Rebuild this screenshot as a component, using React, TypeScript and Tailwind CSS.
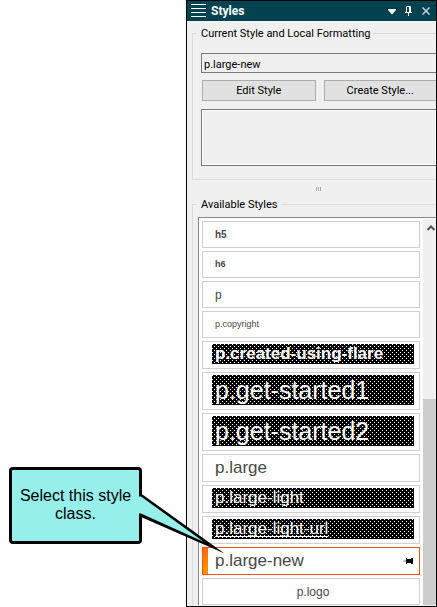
import React from "react";

type StyleItem = { name: string; box: string; text: string; dark?: boolean; selected?: boolean };

const items: StyleItem[] = [
  { name: "h5", box: "h-[27px]", text: "text-[10px] font-bold" },
  { name: "h6", box: "h-[27px]", text: "text-[9px] font-bold" },
  { name: "p", box: "h-[27px]", text: "text-[12px]" },
  { name: "p.copyright", box: "h-[27px]", text: "text-[9px]" },
  { name: "p.created-using-flare", box: "h-7", text: "text-[17px] font-bold h-5 leading-5", dark: true },
  { name: "p.get-started1", box: "h-[38px]", text: "text-[25px] h-[30px] leading-[30px]", dark: true },
  { name: "p.get-started2", box: "h-[38px]", text: "text-[25px] h-[30px] leading-[30px]", dark: true },
  { name: "p.large", box: "h-7", text: "text-[17px]" },
  { name: "p.large-light", box: "h-7", text: "text-[17px] h-5 leading-5", dark: true },
  { name: "p.large-light-url", box: "h-7", text: "text-[17px] h-5 leading-5 underline underline-offset-2 decoration-1 [text-decoration-skip-ink:none]", dark: true },
  { name: "p.large-new", box: "h-7", text: "text-[17px]", selected: true },
  { name: "p.logo", box: "h-[27px]", text: "text-[12px] w-full text-center" },
];

function StyleRow({ item }: { item: StyleItem }) {
  const border = item.selected ? "border-[#f4500f]" : "border-[#d0d0d0]";
  return (
    <li>
      <button type="button" className={`flex w-full border bg-white text-left ${border} ${item.box} ${item.dark ? "items-start pt-0.5 pr-[5px] pl-[9px]" : "items-center"}`}>
        {item.selected && <span className="h-full w-[5px] shrink-0 bg-linear-to-b from-[#ff6a00] to-[#ff9500]" />}
        <span
          className={`${item.text} ${
            item.dark
              ? "w-full bg-black bg-[conic-gradient(from_0deg_at_1px_1px,#0000_270deg,#fff_0),conic-gradient(from_0deg_at_1px_1px,#0000_270deg,#fff_0)] bg-[length:4px_4px] bg-[position:0_0,2px_2px] pl-[3px] text-white"
              : item.selected ? "pl-[7px] text-[#484848]" : item.name === "p.logo" ? "pl-1 text-[#484848]" : "pl-3 text-[#484848]"
          }`}
        >
          {item.name}
        </span>
        {item.selected && (
          <svg className="mr-1.5 ml-auto" width="10" height="8" viewBox="0 0 10 8" aria-hidden="true">
            <path d="M0 3.500h3v1H0z" fill="#888" />
            <path d="M3 1h1v1h4V1h2v6H8V6H4v1H3z" fill="#000" />
          </svg>
        )}
      </button>
    </li>
  );
}

const windowButton = "flex h-4 w-[17px] items-center justify-center";
const pushButton = "h-[21px] flex-1 border border-[#adadad] bg-[#e1e1e1] pt-0.5";

export default function App() {
  return (
    <main className="relative h-screen overflow-hidden bg-white pl-[186px] font-[Roboto,'Noto_Sans',sans-serif] text-[11px] text-black">
      <section className="flex h-full flex-col overflow-hidden border border-black bg-[#f0f0f0]">
        <header className="flex h-5 shrink-0 items-center bg-[#004250] pl-1 text-white">
          <svg width="15" height="14" viewBox="0 0 15 14" aria-hidden="true">
            <path d="M0 .5h15M0 4.500h15M0 8.500h15M0 12.500h15" stroke="#fff" />
          </svg>
          <h1 className="pl-[5px] text-[12px] leading-4 font-bold">Styles</h1>
          <div className="ml-auto flex pr-0.5">
            <button type="button" aria-label="Menu" className={windowButton}>
              <svg width="8" height="5" viewBox="0 0 8 5"><path d="M0 0h8v1L4.500 5h-1L0 1z" fill="#fff" /></svg>
            </button>
            <button type="button" aria-label="Pin" className={windowButton}>
              <svg width="7" height="10" viewBox="0 0 7 10"><path d="M1.500 6V.5h4V6M4.500 0v6M0 6.500h7M3.500 6v4" fill="none" stroke="#fff" /></svg>
            </button>
            <button type="button" aria-label="Close" className={windowButton}>
              <svg width="8" height="8" viewBox="0 0 8 8"><path d="M.5.500l7 7M7.500.500l-7 7" stroke="#c5d6da" strokeWidth="1.500" /></svg>
            </button>
          </div>
        </header>

        <fieldset className="mt-[3px] ml-[5px] shrink-0 border-y border-l border-[#dcdcdc] pb-[13px] pl-2">
          <legend className="-ml-1 px-1 pt-0.5 leading-4">Current Style and Local Formatting</legend>
          <input
            aria-label="Current style"
            readOnly
            value="p.large-new"
            className="mt-[11px] block h-5 w-full border border-r-0 border-[#7a7a7a] bg-[#f0f0f0] px-0.5 pt-0.5"
          />
          <div className="mt-[7px] -mr-px flex gap-2 pl-px">
            <button type="button" className={pushButton}>Edit Style</button>
            <button type="button" className={pushButton}>Create Style...</button>
          </div>
          <textarea
            aria-label="Local formatting"
            readOnly
            className="mt-2 block h-[57px] w-full resize-none border border-r-0 border-[#7a7a7a] bg-[#f0f0f0] shadow-[inset_0_0_0_1px_#fff]"
          />
        </fieldset>

        <div className="mt-[7px] mr-[-14px] flex h-1 shrink-0 justify-center gap-px" aria-hidden="true">
          <span className="w-px bg-[#a8a8a8]" />
          <span className="w-px bg-[#a8a8a8]" />
          <span className="w-px bg-[#a8a8a8]" />
        </div>

        <fieldset className="mt-1 ml-[5px] min-h-0 flex-1 border-t border-l border-[#dcdcdc] pl-[5px]">
          <legend className="-ml-px px-1 pt-0.5 leading-4">Available Styles</legend>
          <div className="mt-1 flex border-t border-l border-[#828790] bg-white font-['Liberation_Sans',Arial,sans-serif]">
            <ul className="flex min-w-0 flex-1 flex-col gap-[3px] px-[3px] pt-[3px]">
              {items.map((item) => <StyleRow key={item.name} item={item} />)}
            </ul>
            <div className="mt-px flex w-[13px] flex-col bg-[#f0f0f0]">
              <button type="button" aria-label="Scroll up" className="flex h-[17px] items-center justify-center pl-0.5">
                <svg width="8" height="6" viewBox="0 0 8 6"><path d="M.5 5L4 1.500 7.500 5" fill="none" stroke="#555" strokeWidth="2" /></svg>
              </button>
              <div className="mt-[163px] flex-1 bg-[#cdcdcd]" />
            </div>
          </div>
        </fieldset>
      </section>

      <aside className="absolute top-[467px] left-[9px] flex h-[77px] w-[133px] items-center justify-center rounded border-3 border-black bg-[#97efec] pb-0.5 text-center font-['Liberation_Sans',Arial,sans-serif] text-[16px] leading-[18px]">
        <p>Select this style class.</p>
        <svg className="absolute top-[22px] left-[126px]" width="90" height="66" viewBox="0 0 90 66" aria-hidden="true">
          <path d="M1 1.500h2L86.500 61.500 3 25H1z" fill="#000" />
          <path d="M0 4.500h3L66 50 3 21.500H0z" fill="#97efec" />
        </svg>
      </aside>
    </main>
  );
}
